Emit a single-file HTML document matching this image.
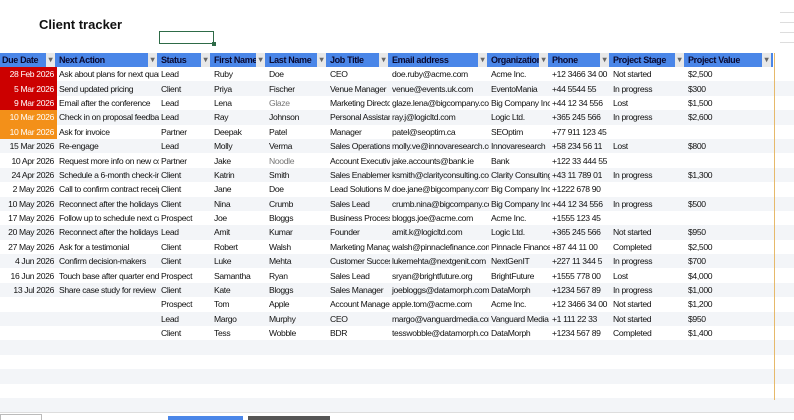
<!DOCTYPE html>
<html><head><meta charset="utf-8"><style>
*{margin:0;padding:0;box-sizing:border-box}
body{width:794px;height:420px;overflow:hidden;background:#fff;font-family:"Liberation Sans",sans-serif;position:relative}
.title{position:absolute;left:39px;top:17px;font-size:13px;font-weight:bold;color:#111}
.sel{position:absolute;left:159px;top:31px;width:55px;height:13px;border:1.5px solid #2e6b47}
.sel:after{content:"";position:absolute;right:-3px;bottom:-3px;width:4px;height:4px;background:#2e6b47}
.stripes{position:absolute;left:0;top:67px;width:794px}
.stripes div{height:14.4px}
.stripes div:nth-child(even){background:#f3f5f8}
table{position:absolute;left:0;top:53px;border-collapse:collapse;table-layout:fixed;width:773px}
td,th{height:14.4px;font-size:8.6px;letter-spacing:-0.35px;white-space:nowrap;overflow:hidden;padding:0 2px;color:#111;font-weight:normal;text-align:left;line-height:14px}
th{background:#4a86e8;font-weight:bold;font-size:9px;color:#0a0a30;position:relative;padding-right:12px;height:14px}
th:after{content:"▾";position:absolute;right:2px;top:0;font-size:8px;color:#666;background:#e8e8e8;width:9px;text-align:center}
td.d{text-align:right;padding-right:3px}
td.r{background:#cc0000;color:#fff}
td.o{background:#f39019;color:#fff}
.gr{color:#777}
.vline{position:absolute;left:774px;top:53px;width:1px;height:347px;background:#e6b96a}
.rl{position:absolute;left:780px;width:14px;height:1px;background:#ddd}
.tab1{position:absolute;left:0;top:414px;width:42px;height:6px;border:1px solid #bbb;border-bottom:none}
.tab2{position:absolute;left:168px;top:416px;width:75px;height:4px;background:#4a86e8}
.tab3{position:absolute;left:248px;top:416px;width:82px;height:4px;background:#555}
.bot{position:absolute;left:0;top:412px;width:794px;height:1px;background:#ddd}
</style></head><body>
<div class="title">Client tracker</div>
<div class="sel"></div>
<div class="stripes">
<div></div><div></div><div></div><div></div><div></div><div></div><div></div><div></div><div></div><div></div><div></div><div></div><div></div><div></div><div></div><div></div><div></div><div></div><div></div><div></div><div></div><div></div><div></div><div></div>
</div>
<table>
<colgroup><col style="width:57px"><col style="width:102px"><col style="width:53px"><col style="width:55px"><col style="width:61px"><col style="width:62px"><col style="width:99px"><col style="width:61px"><col style="width:61px"><col style="width:75px"><col style="width:87px"></colgroup>
<tr><th>Due Date</th><th>Next Action</th><th>Status</th><th>First Name</th><th>Last Name</th><th>Job Title</th><th>Email address</th><th>Organization</th><th>Phone</th><th>Project Stage</th><th>Project Value</th></tr>
<tr><td class="d r">28 Feb 2026</td><td>Ask about plans for next quarter</td><td>Lead</td><td>Ruby</td><td>Doe</td><td>CEO</td><td>doe.ruby@acme.com</td><td>Acme Inc.</td><td>+12 3466 34 00</td><td>Not started</td><td>$2,500</td></tr>
<tr><td class="d r">5 Mar 2026</td><td>Send updated pricing</td><td>Client</td><td>Priya</td><td>Fischer</td><td>Venue Manager</td><td>venue@events.uk.com</td><td>EventoMania</td><td>+44 5544 55</td><td>In progress</td><td>$300</td></tr>
<tr><td class="d r">9 Mar 2026</td><td>Email after the conference</td><td>Lead</td><td>Lena</td><td class="gr">Glaze</td><td>Marketing Director</td><td>glaze.lena@bigcompany.com</td><td>Big Company Inc</td><td>+44 12 34 556</td><td>Lost</td><td>$1,500</td></tr>
<tr><td class="d o">10 Mar 2026</td><td>Check in on proposal feedback</td><td>Lead</td><td>Ray</td><td>Johnson</td><td>Personal Assistant</td><td>ray.j@logicltd.com</td><td>Logic Ltd.</td><td>+365 245 566</td><td>In progress</td><td>$2,600</td></tr>
<tr><td class="d o">10 Mar 2026</td><td>Ask for invoice</td><td>Partner</td><td>Deepak</td><td>Patel</td><td>Manager</td><td>patel@seoptim.ca</td><td>SEOptim</td><td>+77 911 123 45</td><td></td><td></td></tr>
<tr><td class="d">15 Mar 2026</td><td>Re-engage</td><td>Lead</td><td>Molly</td><td>Verma</td><td>Sales Operations</td><td>molly.ve@innovaresearch.com</td><td>Innovaresearch</td><td>+58 234 56 11</td><td>Lost</td><td>$800</td></tr>
<tr><td class="d">10 Apr 2026</td><td>Request more info on new contract</td><td>Partner</td><td>Jake</td><td class="gr">Noodle</td><td>Account Executive</td><td>jake.accounts@bank.ie</td><td>Bank</td><td>+122 33 444 55</td><td></td><td></td></tr>
<tr><td class="d">24 Apr 2026</td><td>Schedule a 6-month check-in</td><td>Client</td><td>Katrin</td><td>Smith</td><td>Sales Enablement</td><td>ksmith@clarityconsulting.com</td><td>Clarity Consulting</td><td>+43 11 789 01</td><td>In progress</td><td>$1,300</td></tr>
<tr><td class="d">2 May 2026</td><td>Call to confirm contract receipt</td><td>Client</td><td>Jane</td><td>Doe</td><td>Lead Solutions Manager</td><td>doe.jane@bigcompany.com</td><td>Big Company Inc</td><td>+1222 678 90</td><td></td><td></td></tr>
<tr><td class="d">10 May 2026</td><td>Reconnect after the holidays</td><td>Client</td><td>Nina</td><td>Crumb</td><td>Sales Lead</td><td>crumb.nina@bigcompany.com</td><td>Big Company Inc</td><td>+44 12 34 556</td><td>In progress</td><td>$500</td></tr>
<tr><td class="d">17 May 2026</td><td>Follow up to schedule next call</td><td>Prospect</td><td>Joe</td><td>Bloggs</td><td>Business Process</td><td>bloggs.joe@acme.com</td><td>Acme Inc.</td><td>+1555 123 45</td><td></td><td></td></tr>
<tr><td class="d">20 May 2026</td><td>Reconnect after the holidays</td><td>Lead</td><td>Amit</td><td>Kumar</td><td>Founder</td><td>amit.k@logicltd.com</td><td>Logic Ltd.</td><td>+365 245 566</td><td>Not started</td><td>$950</td></tr>
<tr><td class="d">27 May 2026</td><td>Ask for a testimonial</td><td>Client</td><td>Robert</td><td>Walsh</td><td>Marketing Manager</td><td>walsh@pinnaclefinance.com</td><td>Pinnacle Finance</td><td>+87 44 11 00</td><td>Completed</td><td>$2,500</td></tr>
<tr><td class="d">4 Jun 2026</td><td>Confirm decision-makers</td><td>Client</td><td>Luke</td><td>Mehta</td><td>Customer Success</td><td>lukemehta@nextgenit.com</td><td>NextGenIT</td><td>+227 11 344 5</td><td>In progress</td><td>$700</td></tr>
<tr><td class="d">16 Jun 2026</td><td>Touch base after quarter end</td><td>Prospect</td><td>Samantha</td><td>Ryan</td><td>Sales Lead</td><td>sryan@brightfuture.org</td><td>BrightFuture</td><td>+1555 778 00</td><td>Lost</td><td>$4,000</td></tr>
<tr><td class="d">13 Jul 2026</td><td>Share case study for review</td><td>Client</td><td>Kate</td><td>Bloggs</td><td>Sales Manager</td><td>joebloggs@datamorph.com</td><td>DataMorph</td><td>+1234 567 89</td><td>In progress</td><td>$1,000</td></tr>
<tr><td></td><td></td><td>Prospect</td><td>Tom</td><td>Apple</td><td>Account Manager</td><td>apple.tom@acme.com</td><td>Acme Inc.</td><td>+12 3466 34 00</td><td>Not started</td><td>$1,200</td></tr>
<tr><td></td><td></td><td>Lead</td><td>Margo</td><td>Murphy</td><td>CEO</td><td>margo@vanguardmedia.com</td><td>Vanguard Media</td><td>+1 111 22 33</td><td>Not started</td><td>$950</td></tr>
<tr><td></td><td></td><td>Client</td><td>Tess</td><td>Wobble</td><td>BDR</td><td>tesswobble@datamorph.com</td><td>DataMorph</td><td>+1234 567 89</td><td>Completed</td><td>$1,400</td></tr>
</table>
<div class="vline"></div>
<div class="rl" style="top:12px"></div><div class="rl" style="top:22px"></div><div class="rl" style="top:32px"></div><div class="rl" style="top:42px"></div>
<div class="bot"></div>
<div class="tab1"></div><div class="tab2"></div><div class="tab3"></div>
</body></html>
